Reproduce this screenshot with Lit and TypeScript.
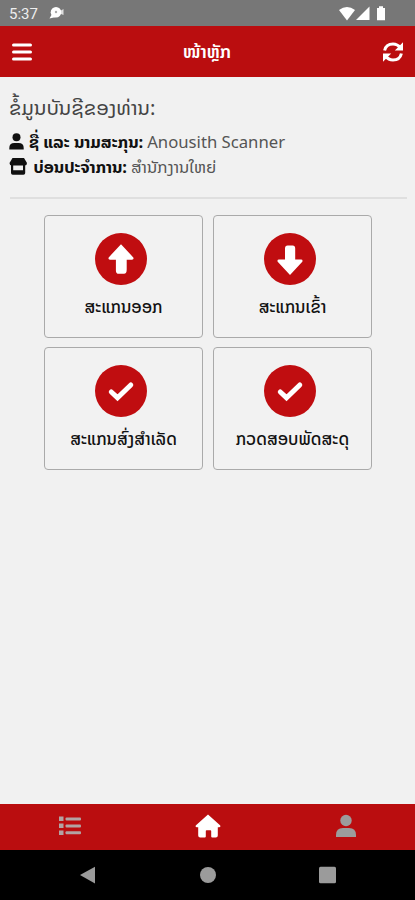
import { LitElement, html, css, svg } from "lit";
import { customElement, property } from "lit/decorators.js";

const glyphs: Record<string, unknown> = {
  up: svg`<path d="M26 11.2 38.3 24.4Q39.2 26.6 37 26.7H31.7V36.5Q31.7 40.8 29 40.8H23.8Q20.9 40.8 20.9 37.7V26.7H15Q12.8 26.5 13.7 24.4Z"/>`,
  down: svg`<path d="M26 42 38.3 28.8Q39.2 26.6 37 26.5H31.2V15.5Q31.2 12.6 28.6 12.6H23.6Q21 12.6 21 15.5V26.5H15Q12.8 26.6 13.7 28.8Z"/>`,
  check: svg`<path d="M16.3 27 22.5 32.7 35.8 20" fill="none" stroke="#fff" stroke-width="5" stroke-linecap="round" stroke-linejoin="miter"/>`,
};

@customElement("scan-card")
class ScanCard extends LitElement {
  @property() icon = "check";
  @property() label = "";
  static styles = css`
    :host { box-sizing: border-box; height: 123px; border: 1px solid #aaa; border-radius: 4px;
      display: flex; flex-direction: column; align-items: center; padding-top: 17px; background: #f2f2f2; }
    svg { width: 52px; height: 52px; display: block; flex: none; margin-right: 5px; }
    .label { margin-top: 11px; font-size: 16.9px; font-weight: 500; line-height: 22px; color: #111; white-space: nowrap; }
  `;
  render() {
    return html`<svg viewBox="0 0 52 52" fill="#fff"><circle cx="26" cy="26" r="26" fill="#c00d10"/>${glyphs[this.icon]}</svg>
      <div class="label">${this.label}</div>`;
  }
}

@customElement("app-root")
class AppRoot extends LitElement {
  static styles = css`
    :host { display: flex; flex-direction: column; width: 415px; height: 900px; overflow: hidden; background: #f1f1f1;
      font-family: "Noto Sans Lao", "Open Sans", "Noto Sans", "DejaVu Sans", sans-serif; }
    svg { display: block; flex: none; }
    .status { height: 26px; box-sizing: border-box; flex: none; background: #777; color: #fff; display: flex; align-items: center; padding: 0 28px 0 9px; }
    .time { font: 15px/26px Roboto, sans-serif; width: 40px; color: #eee; padding-top: 1px; }
    .signals { margin-left: auto; }
    .bar { height: 50.5px; flex: none; box-sizing: border-box; background: #ba0d0f; color: #fff; display: grid; grid-template-columns: 22px 1fr 22px; align-items: center; padding: 1px 11px 0 11px; }
    .title { text-align: center; font-size: 18px; font-weight: 600; line-height: 24px; padding-right: 1px; }
    main { flex: 1; min-height: 0; }
    .account { padding: 16.5px 8px 0 9px; height: 120px; box-sizing: border-box; }
    h1 { margin: 0; font-size: 20.3px; font-weight: 400; line-height: 30px; color: #444; white-space: nowrap; }
    .row { display: flex; align-items: center; height: 25px; line-height: 22px; font-size: 16.7px; color: #555; white-space: nowrap; }
    .row.first { margin-top: 6px; }
    .row b { color: #111; margin-right: 4px; font-weight: 700; }
    .rule { height: 2px; background: #dfdfdf; margin: 0 8px 0 10px; }
    .cards { display: grid; grid-template-columns: 159px 159px; gap: 9.5px 10px; padding: 16px 0 0 44px; }
    .tabs { height: 46.5px; flex: none; box-sizing: border-box; padding: 0 0 1px 1px; background: #ba0d0f; display: grid; grid-template-columns: repeat(3, 1fr); place-items: center; }
    .nav { height: 50px; flex: none; background: #000; display: flex; justify-content: center; align-items: center; }
  `;
  render() {
    return html`
      <div class="status">
        <div class="time">5:37</div>
        <svg width="16" height="14" viewBox="0 0 16 14" fill="#fff"><circle cx="7" cy="6.3" r="5.3"/><path d="M3 8 .5 12.5 7 11Z"/><path d="M12 4.5 14.500 3v6L12 8Z" fill="#ddd"/><circle cx="7" cy="6" r="1.2" fill="#aaa"/></svg>
        <svg class="signals" width="48" height="15" viewBox="0 0 48 15" fill="#fff"><path d="M0 4Q8-2 16 4L8 14.5Z"/><path d="M30.5.5V14H17Z"/><path d="M38 2h2V.3h4V2h2v12.3h-8Z"/></svg>
      </div>
      <header class="bar">
        <svg width="22" height="20" viewBox="0 0 22 20" stroke="#fff" stroke-width="3" stroke-linecap="round"><path d="M2.5 3h17M2.5 10h17M2.5 17h17"/></svg>
        <div class="title">ໜ້າຫຼັກ</div>
        <svg width="22" height="22" viewBox="0 0 22 22" fill="none" stroke="#fff" stroke-width="3"><path d="M2.6 9.5Q4 3 11 3q4.500 0 7.500 4"/><path d="M19.4 12.5Q18 19 11 19q-4.500 0-7.500-4"/><path d="M21 1.200V9.500h-8.200ZM1 20.800v-8.300h8.200Z" fill="#fff" stroke="none"/></svg>
      </header>
      <main>
        <section class="account">
          <h1>ຂໍ້ມູນບັນຊີຂອງທ່ານ:</h1>
          <div class="row first"><svg width="20" height="17" viewBox="0 0 20 17" fill="#111"><circle cx="7.500" cy="4.200" r="4"/><path d="M.3 16.500v-1.500Q.3 10 5.300 10h4.400q5 0 5 5v1.500Z"/></svg><b>ຊື່ ແລະ ນາມສະກຸນ:</b><span>Anousith Scanner</span></div>
          <div class="row"><svg width="24.5" height="17" viewBox="0 0 24.5 17" fill="#111"><path d="M3.500 0h11.500l3 5q0 2.500-2.300 2.500H2.800Q.5 7.500.5 5Z"/><path d="M2 6.500h2.200v5.800h9.800v-5.800h2.200V15q0 1.700-1.700 1.700H3.700Q2 16.700 2 15Z"/></svg><b>ບ່ອນປະຈໍາການ:</b><span>ສໍານັກງານໃຫຍ່</span></div>
        </section>
        <div class="rule"></div>
        <section class="cards">
          <scan-card icon="up" label="ສະແກນອອກ"></scan-card>
          <scan-card icon="down" label="ສະແກນເຂົ້າ"></scan-card>
          <scan-card icon="check" label="ສະແກນສົ່ງສໍາເລັດ"></scan-card>
          <scan-card icon="check" label="ກວດສອບພັດສະດຸ"></scan-card>
        </section>
      </main>
      <footer class="tabs">
        <svg width="22" height="20" viewBox="0 0 22 20" fill="#b3a3a3"><path d="M0 .5h4.500V5H0ZM0 7.500h4.500V12H0ZM0 14.500h4.500V19H0Z"/><rect x="6.500" y="1.500" width="15.500" height="3" rx="1"/><rect x="6.500" y="8.500" width="15.500" height="3" rx="1"/><rect x="6.500" y="15.300" width="15.500" height="3" rx="1"/></svg>
        <svg width="26" height="24" viewBox="0 0 26 24" fill="#fff"><path d="M13 .5 25 11.200q1.200 1.800-1 2h-1.200v8.300q0 2-2 2h-3.600q-1 0-1-1V17q0-.8-.8-.8h-3.800q-.8 0-.8.800v5.500q0 1-1 1H5.200q-2 0-2-2v-8.300H2q-2.200-.2-1-2Z"/></svg>
        <svg width="20" height="24" viewBox="0 0 20 24" fill="#9c9c9c"><circle cx="10" cy="6.500" r="5.700"/><path d="M0 23v-2Q0 14 7 14h6q7 0 7 7v2Z"/></svg>
      </footer>
      <div class="nav"><svg width="258" height="18" viewBox="0 0 258 18" fill="#9b9b9b"><path d="M1 9 16 .8V17.400Z"/><circle cx="129" cy="9" r="8"/><rect x="240" y=".7" width="17" height="16.600" rx="1.500"/></svg></div>`;
  }
}
